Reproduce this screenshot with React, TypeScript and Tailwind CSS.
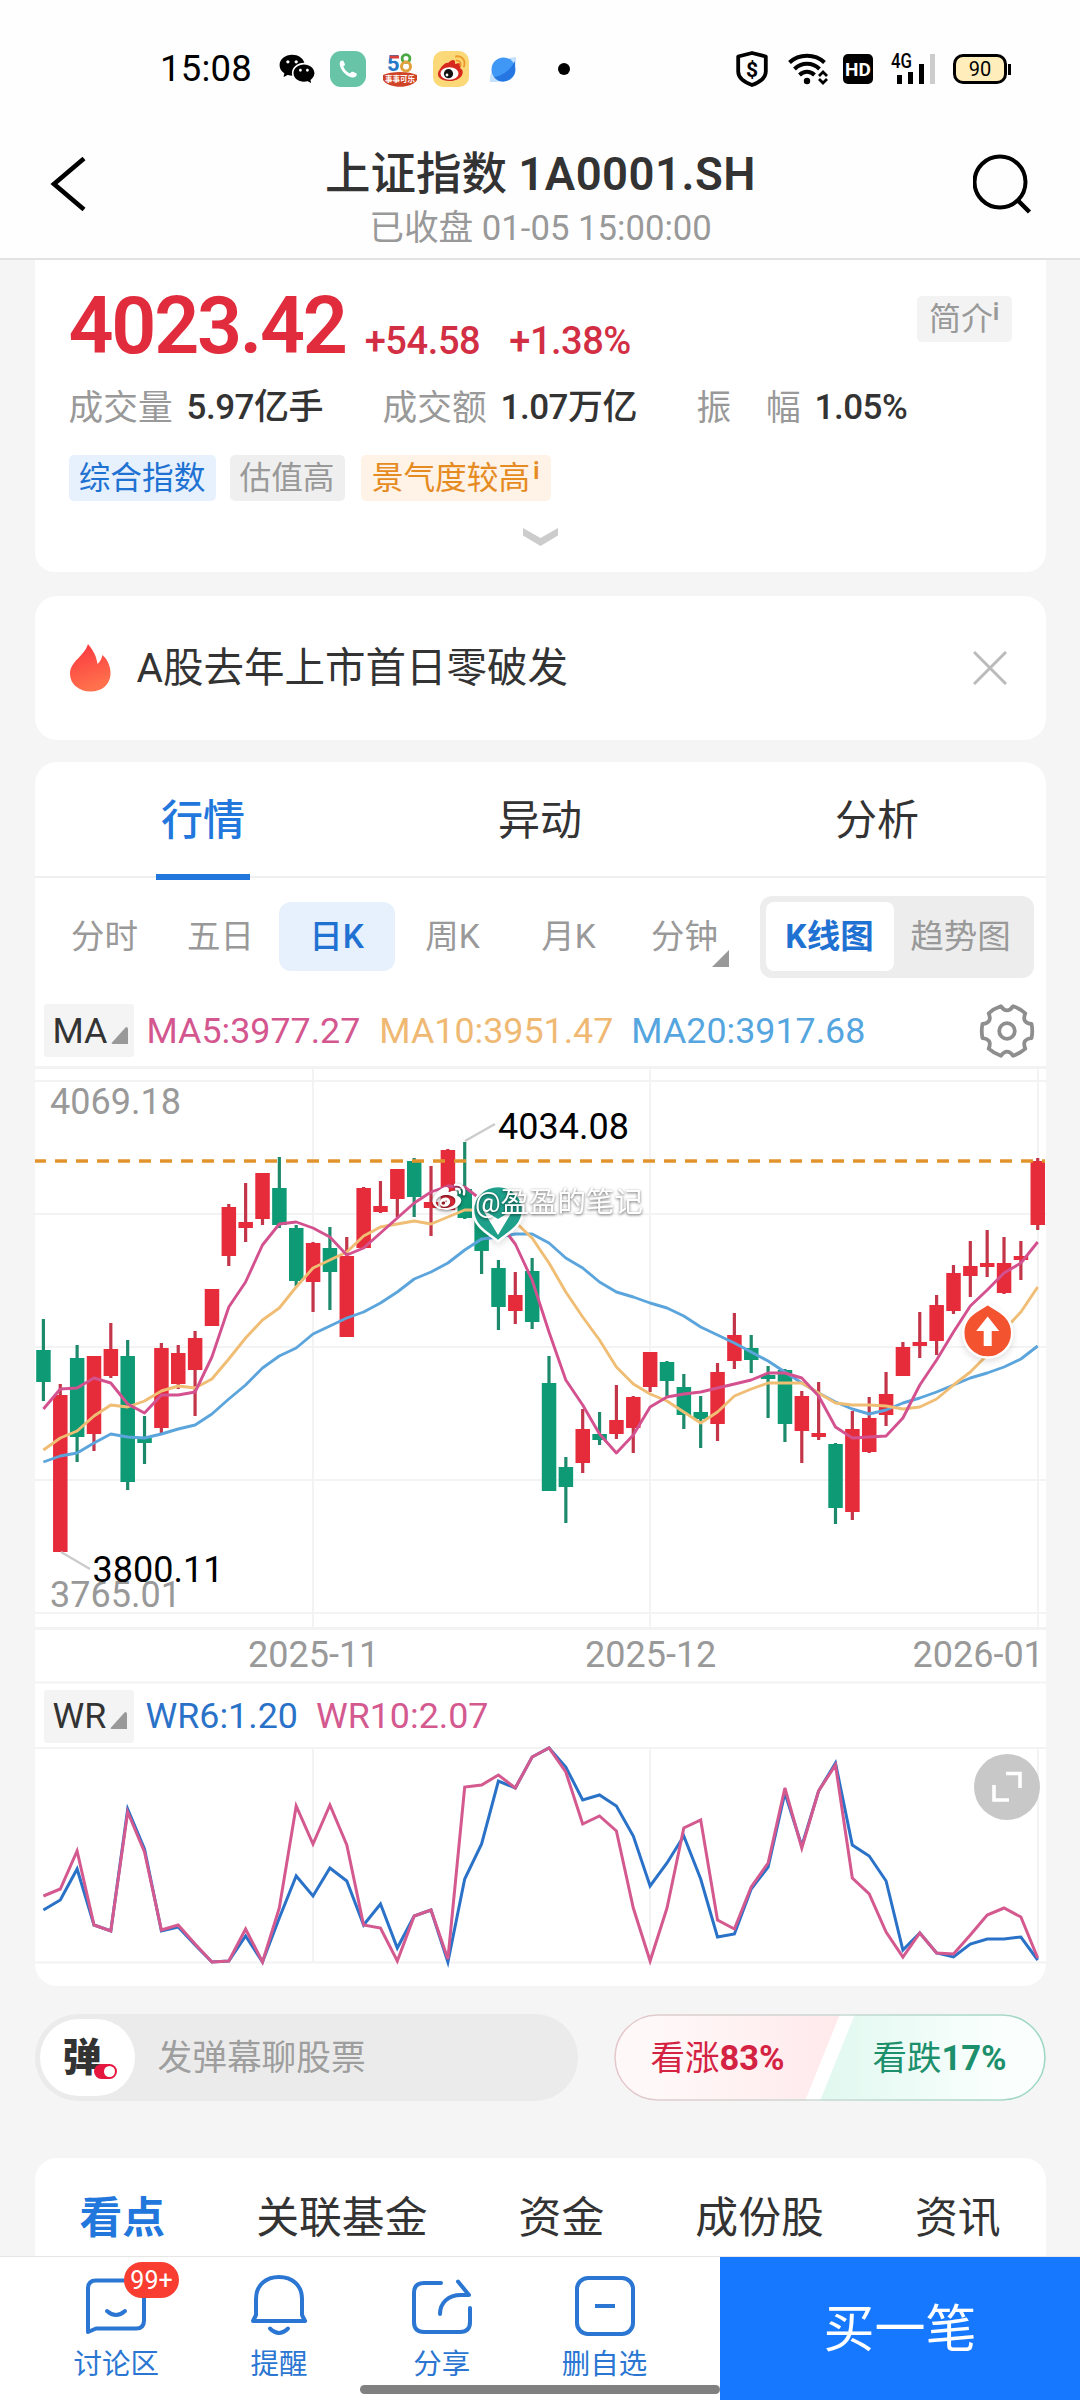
import React from "react";
import { RiWechatFill, RiWeiboFill } from "react-icons/ri";

type Candle = [up: 0 | 1, high: number, top: number, bottom: number, low: number];

const CANDLES: Candle[] = [
  [0, 1319, 1350, 1382, 1401], [1, 1384, 1395, 1552, 1552], [0, 1345, 1358, 1437, 1462], [1, 1356, 1356, 1434, 1451],
  [1, 1323, 1349, 1376, 1378], [0, 1340, 1356, 1482, 1490], [0, 1416, 1438, 1443, 1464], [1, 1343, 1348, 1428, 1433],
  [1, 1345, 1353, 1384, 1389], [1, 1331, 1338, 1370, 1416], [1, 1289, 1289, 1326, 1326], [1, 1204, 1207, 1256, 1266],
  [1, 1183, 1222, 1228, 1242], [1, 1173, 1173, 1219, 1225], [0, 1157, 1188, 1225, 1228], [0, 1225, 1228, 1281, 1286],
  [1, 1242, 1243, 1282, 1312], [0, 1227, 1248, 1272, 1310], [1, 1237, 1256, 1337, 1337], [1, 1187, 1188, 1248, 1249],
  [1, 1181, 1206, 1212, 1213], [1, 1169, 1169, 1199, 1217], [0, 1158, 1161, 1197, 1217], [1, 1166, 1202, 1208, 1236],
  [1, 1149, 1150, 1210, 1210], [0, 1142, 1189, 1218, 1219], [0, 1215, 1218, 1251, 1274], [0, 1260, 1268, 1307, 1330],
  [1, 1272, 1295, 1311, 1324], [0, 1258, 1271, 1322, 1329], [0, 1356, 1383, 1491, 1491], [0, 1457, 1467, 1487, 1523],
  [1, 1409, 1429, 1463, 1473], [0, 1412, 1434, 1440, 1445], [1, 1385, 1420, 1434, 1439], [1, 1396, 1397, 1428, 1453],
  [1, 1352, 1352, 1387, 1392], [0, 1361, 1362, 1381, 1398], [0, 1374, 1387, 1415, 1429], [0, 1396, 1412, 1419, 1448],
  [1, 1363, 1372, 1424, 1441], [1, 1313, 1335, 1361, 1369], [0, 1335, 1348, 1360, 1373], [0, 1366, 1375, 1379, 1418],
  [0, 1369, 1370, 1424, 1442], [1, 1391, 1396, 1431, 1463], [1, 1382, 1433, 1437, 1440], [0, 1443, 1444, 1508, 1524],
  [1, 1411, 1429, 1512, 1520], [1, 1397, 1418, 1452, 1453], [1, 1372, 1394, 1415, 1426], [1, 1342, 1347, 1376, 1376],
  [1, 1312, 1342, 1346, 1358], [1, 1295, 1305, 1341, 1355], [1, 1265, 1273, 1311, 1314], [1, 1241, 1266, 1276, 1297],
  [1, 1230, 1263, 1267, 1277], [1, 1237, 1263, 1293, 1294], [1, 1241, 1256, 1260, 1280], [1, 1158, 1161, 1225, 1230],
];

const MA5 = [1409, 1389, 1388, 1378, 1383, 1404, 1413, 1395, 1395, 1392, 1357, 1307, 1282, 1245, 1224, 1222, 1228, 1237, 1255, 1248, 1233, 1218, 1203, 1192, 1186, 1187, 1200, 1222, 1244, 1280, 1332, 1380, 1405, 1434, 1453, 1435, 1407, 1397, 1394, 1392, 1388, 1384, 1380, 1373, 1373, 1378, 1396, 1427, 1438, 1437, 1436, 1418, 1385, 1360, 1332, 1306, 1290, 1273, 1263, 1242];
const MA10 = [1450, 1438, 1431, 1416, 1405, 1407, 1401, 1391, 1386, 1388, 1379, 1359, 1338, 1320, 1308, 1287, 1268, 1260, 1252, 1236, 1227, 1224, 1221, 1224, 1217, 1210, 1210, 1214, 1222, 1238, 1263, 1292, 1317, 1340, 1367, 1384, 1394, 1401, 1412, 1423, 1412, 1396, 1389, 1383, 1383, 1383, 1393, 1403, 1405, 1405, 1406, 1409, 1407, 1399, 1385, 1372, 1355, 1330, 1312, 1287];
const MA20 = [1462, 1456, 1453, 1443, 1434, 1437, 1438, 1434, 1429, 1425, 1414, 1399, 1385, 1368, 1356, 1348, 1334, 1326, 1318, 1312, 1303, 1292, 1279, 1272, 1263, 1250, 1239, 1237, 1234, 1234, 1243, 1258, 1268, 1282, 1292, 1297, 1303, 1308, 1316, 1327, 1335, 1343, 1352, 1361, 1372, 1383, 1393, 1402, 1409, 1414, 1410, 1403, 1398, 1392, 1385, 1378, 1373, 1367, 1359, 1346];
const WR6 = [1910, 1900, 1869, 1925, 1931, 1809, 1849, 1931, 1927, 1945, 1962, 1961, 1936, 1962, 1918, 1876, 1896, 1868, 1881, 1925, 1904, 1948, 1916, 1910, 1962, 1879, 1844, 1781, 1788, 1757, 1748, 1767, 1800, 1795, 1806, 1836, 1886, 1863, 1836, 1879, 1937, 1934, 1889, 1867, 1793, 1846, 1791, 1763, 1845, 1856, 1881, 1950, 1933, 1953, 1957, 1944, 1939, 1939, 1937, 1960];
const WR10 = [1896, 1889, 1851, 1925, 1931, 1812, 1852, 1930, 1925, 1944, 1962, 1961, 1929, 1962, 1908, 1806, 1844, 1805, 1845, 1925, 1928, 1961, 1916, 1910, 1959, 1787, 1785, 1775, 1788, 1757, 1748, 1772, 1824, 1816, 1831, 1908, 1961, 1908, 1828, 1820, 1920, 1929, 1887, 1863, 1788, 1848, 1791, 1765, 1878, 1894, 1932, 1957, 1933, 1953, 1954, 1935, 1915, 1908, 1917, 1958];

const RED = "#e62b3b";
const GREEN = "#0f9a76";
const xAt = (i: number) => 43.4 + i * 16.853;
const line = (ys: number[]) => ys.map((y, i) => `${xAt(i).toFixed(1)},${y}`).join(" ");

function gearPath() {
  const p = (deg: number, r: number) => {
    const a = (deg * Math.PI) / 180;
    return `${(30 + r * Math.cos(a)).toFixed(2)} ${(30 + r * Math.sin(a)).toFixed(2)}`;
  };
  let d = `M${p(-16, 25.5)}`;
  for (let k = 0; k < 6; k++) {
    d += `Q${p(60 * k, 26)} ${p(60 * k + 16, 25.5)}Q${p(60 * k + 30, 16.5)} ${p(60 * k + 44, 25.5)}`;
  }
  return d + "Z";
}

function StatusBar() {
  return (
    <div className="flex h-[80px] shrink-0 items-center pl-[160px] pr-[69px] pt-[58px]">
      <span className="w-[91px] text-[36.500px] leading-[38px] tracking-[0.2px] text-black">15:08</span>
      <RiWechatFill className="ml-[27px] size-[38px] text-black" />
      <svg className="ml-[14px] size-[36px]" viewBox="0 0 36 36">
        <rect width="36" height="36" rx="11" fill="#67c4a7" />
        <path d="M12 9.500c-2 .6-2.600 2-2.200 4.200C10.800 19.500 16 25 21.800 26.400c2.600.5 4.200-.2 4.900-2.300.3-1-.1-1.600-.9-2l-3-1.300c-.7-.3-1.300-.1-1.800.5l-1 1.200c-3.300-1.500-5.300-3.800-6.700-7l1.200-1.100c.5-.5.6-1 .3-1.700l-1.200-2.500c-.3-.6-.8-.9-1.600-.7Z" fill="#fff" />
      </svg>
      <svg className="ml-[16px] size-[36px] overflow-visible" viewBox="0 0 36 36">
        <text x="5" y="20" fontSize="22" fontWeight="700" fill="#2779c8">5</text>
        <path d="M8 4.500h9v3h-9z" fill="#d9413c" />
        <circle cx="24" cy="7.500" r="3.900" fill="none" stroke="#4aa741" strokeWidth="2.800" />
        <circle cx="24" cy="15.500" r="4.500" fill="none" stroke="#e0a03c" strokeWidth="3" />
        <path d="M1 24c8-4 26-4 34 0v5c-5 9-29 9-34 0Z" fill="#cf4326" />
        <text x="3" y="31" fontSize="7.500" fontWeight="700" fill="#fff">事事可乐</text>
      </svg>
      <svg className="ml-[15px] size-[36px]" viewBox="0 0 36 36">
        <rect width="36" height="36" rx="10" fill="#fbd978" />
        <path d="M15 12c4-4 8-4 7 1 5-2 8 0 5 4 6 3 2 13-10 13C6 30 2 24 7 18c2-3 6-7 8-6Z" fill="#d7281f" />
        <ellipse cx="16.500" cy="22.500" rx="9" ry="6.200" fill="#fff" />
        <circle cx="15.500" cy="22.700" r="4.600" fill="#111" />
        <circle cx="14" cy="24" r="1.400" fill="#fff" />
        <path d="M23 5.500c6-1 10 4 8 10M23.500 9.500c3 0 5 2 4 5" fill="none" stroke="#ee9b2e" strokeWidth="2" strokeLinecap="round" />
      </svg>
      <svg className="ml-[16px] size-[36px]" viewBox="0 0 36 36">
        <path d="M5 31C4 24 8 8 31 6c0 8-1 14-5 19C20 31 12 31 5 31Z" fill="#c4e0fd" />
        <circle cx="18.500" cy="18.500" r="12" fill="#3f97f6" />
        <path d="M9 26C18 25 26 18 30 10v10c-1 9-14 15-21 6Z" fill="#2576e0" />
      </svg>
      <span className="ml-[37px] size-[12px] rounded-full bg-black" />
      <svg className="ml-auto h-[36px] w-[32px] overflow-visible" viewBox="0 0 32 36">
        <path d="M16 2 29.800 5.500v15c0 6-5.500 10.500-13.800 13.500C7.700 31 2.200 26.500 2.200 20.500v-15Z" fill="none" stroke="#000" strokeWidth="3.800" strokeLinejoin="round" />
        <text x="16" y="25.500" fontSize="21" fontWeight="700" textAnchor="middle" fill="#000">$</text>
      </svg>
      <svg className="ml-[20px] h-[32px] w-[42px]" viewBox="0 0 42 32">
        <g fill="none" stroke="#000" strokeWidth="4">
          <path d="M1.500 9.500C11 .5 27 .5 36.500 9.500" />
          <path d="M6.500 16C13.500 9 24.500 9 31.500 16" />
          <path d="M11.500 22c4.500-4.300 10.500-4.300 15 0" />
          <path d="m31 23 4-4 4 4M31 26l4 4 4-4" strokeWidth="2.800" />
        </g>
        <circle cx="19" cy="28" r="3.200" />
      </svg>
      <span className="ml-[13px] flex h-[30px] w-[30px] items-center justify-center rounded-[5px] bg-black text-[19px] font-bold leading-none text-white">HD</span>
      <svg className="ml-[18px] h-[32px] w-[46px] overflow-visible" viewBox="0 0 46 32">
        <text x="0" y="15" fontSize="20" fontWeight="500" textLength="21" lengthAdjust="spacingAndGlyphs" fill="#000">4G</text>
        <path d="M8.500 22v9M19.500 19v12M30.500 11v20" stroke="#000" strokeWidth="5" />
        <path d="M41.500 1v30" stroke="#ccc" strokeWidth="5" />
      </svg>
      <span className="ml-[16px] flex h-[30px] w-[54px] items-center justify-center rounded-[10px] border-[3px] border-black bg-[#ffeebb] text-[20px] leading-none text-black">90</span>
      <span className="ml-px h-[11px] w-[3px] bg-black" />
    </div>
  );
}

function TitleBar() {
  return (
    <header className="flex h-[180px] shrink-0 justify-between border-b-2 border-[#e2e2e2] pl-[50px] pr-[47px]">
      <svg className="mt-[77px] h-[54px] w-[36px]" viewBox="0 0 36 54">
        <path d="M34 1.500 4 27l30 25.500" fill="none" stroke="#000" strokeWidth="4.600" />
      </svg>
      <div className="flex flex-col items-center pl-[22px]">
        <h1 className="mt-[64px] whitespace-pre text-[45.500px] font-medium leading-[62px] text-[#333]">上证指数 <b className="font-semibold tracking-[0.500px]">1A0001.SH</b></h1>
        <p className="text-[34.700px] leading-[44px] text-[#999]">已收盘 01-05 15:00:00</p>
      </div>
      <svg className="mt-[74px] size-[60px]" viewBox="0 0 60 60">
        <circle cx="27" cy="28" r="25.500" fill="none" stroke="#000" strokeWidth="4" />
        <path d="m45 46.500 11.500 11.500" stroke="#000" strokeWidth="4.500" />
      </svg>
    </header>
  );
}

function Stat({ label, value, className }: { label: string; value: string; className: string }) {
  return (
    <div className={`flex whitespace-pre ${className}`}>
      <span className="text-[34.700px] text-[#999]">{label}</span>
      <span className="ml-[14px] text-[35px] font-medium tracking-[-0.500px] text-[#333]">{value}</span>
    </div>
  );
}

function QuoteCard() {
  return (
    <section className="h-[312px] shrink-0 rounded-b-[20px] bg-white px-[34px]">
      <div className="flex h-[112px] items-end">
        <span className="text-[79px] font-semibold leading-[92px] tracking-[-2.300px] text-[#e02c3c]">4023.42</span>
        <span className="ml-[19px] text-[38px] font-medium leading-[61px] tracking-[-0.400px] text-[#d22f45]">+54.58</span>
        <span className="ml-[29px] text-[38px] font-medium leading-[61px] tracking-[-0.500px] text-[#d22f45]">+1.38%</span>
        <span className="mb-[30px] ml-auto flex h-[46px] w-[95px] justify-center rounded-[5px] bg-[#f3f3f3] text-[32px] leading-[46px] text-[#999]">
          简介<sup className="top-0 text-[23px] font-bold leading-[34px]">i</sup>
        </span>
      </div>
      <div className="mt-[12px] flex h-[48px] items-center leading-[48px]">
        <Stat label="成交量" value="5.97亿手" className="w-[314px]" />
        <Stat label="成交额" value="1.07万亿" className="w-[314px]" />
        <Stat label="振　幅" value="1.05%" className="" />
      </div>
      <div className="mt-[23px] flex h-[46px] text-[31.700px] leading-[47px]">
        <span className="w-[147px] rounded-[5px] bg-[#e7f1fd] text-center text-[#1f72d2]">综合指数</span>
        <span className="ml-[14px] w-[115px] rounded-[5px] bg-[#efefef] text-center text-[#999]">估值高</span>
        <span className="ml-[16px] flex w-[190px] justify-center rounded-[5px] bg-[#fff2e6] text-[#e58b22]">景气度较高<sup className="top-0 ml-[3px] text-[23px] font-bold leading-[34px]">i</sup></span>
      </div>
      <svg className="mx-auto mt-[27px] h-[18px] w-[35px]" viewBox="0 0 35 18">
        <path d="M0 0 17.500 10 35 0V7.500L17.500 18 0 7.500Z" fill="#ccc" />
      </svg>
    </section>
  );
}

function NewsCard() {
  return (
    <section className="mt-[24px] flex h-[144px] shrink-0 items-center rounded-[22px] bg-white px-[35px]">
      <svg className="h-[48px] w-[41px]" viewBox="0 0 41 48">
        <defs>
          <linearGradient id="flame" x1="0" y1="0" x2="0.300" y2="1">
            <stop offset="0" stopColor="#fb3340" />
            <stop offset="1" stopColor="#ff714c" />
          </linearGradient>
        </defs>
        <path d="M18 0c4 5 8 10 9.500 20 2.500-2 4-5 5-9C38 16 41 23 40.500 31 39.500 41 32 47.500 20.500 47.500S0 40 0 30C0 17 14 13 18 0Z" fill="url(#flame)" />
      </svg>
      <span className="ml-[26px] text-[40.500px] leading-[58px] text-[#333]">A股去年上市首日零破发</span>
      <svg className="ml-auto mr-[4px] size-[34px]" viewBox="0 0 34 34">
        <path d="m1 1 32 32M33 1 1 33" stroke="#bbb" strokeWidth="3" />
      </svg>
    </section>
  );
}

function MarketTabs() {
  return (
    <>
      <div className="grid h-[116px] grid-cols-3 border-b-2 border-[#efefef] text-center text-[42px] leading-[118px] text-[#333]">
        <div className="relative font-medium text-[#2277dc]">
          行情
          <span className="absolute bottom-0 left-1/2 h-[6px] w-[94px] -translate-x-1/2 bg-[#2277dc]" />
        </div>
        <div>异动</div>
        <div>分析</div>
      </div>
      <div className="flex h-[115px] items-center pl-[12px] pr-[12px] pt-[2px] text-[33.500px] text-[#999]">
        <div className="grid w-[696px] grid-cols-6 text-center leading-[70px]">
          <span>分时</span>
          <span>五日</span>
          <span className="h-[69px] rounded-[12px] bg-[#e7f1fd] font-medium text-[#1f72d2]">日K</span>
          <span>周K</span>
          <span>月K</span>
          <span className="relative">
            分钟
            <svg className="absolute bottom-[5px] right-[14px] size-[17px]" viewBox="0 0 17 17"><path d="M17 0v17H0Z" fill="#999" /></svg>
          </span>
        </div>
        <div className="ml-auto flex h-[82px] w-[274px] items-center rounded-[12px] bg-[#ededed] px-[6px] text-center leading-[70px]">
          <span className="h-[69px] w-[128px] rounded-[8px] bg-white font-bold text-[#1f72d2]">K线图</span>
          <span className="flex-1">趋势图</span>
        </div>
      </div>
    </>
  );
}

function IndicatorButton({ name }: { name: string }) {
  return (
    <span className="flex h-[53px] w-[90px] items-center rounded-[3px] bg-[#f4f4f4] pl-[9px] text-[#333]">
      {name}
      <svg className="ml-[4px] mt-[9px] size-[17px]" viewBox="0 0 17 17"><path d="M15 0q2 0 2 2v15H1.500q-1.500 0-.5-1.500Z" fill="#999" /></svg>
    </span>
  );
}

function CandleChart() {
  return (
    <svg className="block h-[618px] w-[1011px] shrink-0" viewBox="35 1066 1011 618" fontSize="36">
      <g stroke="#f3f3f3" strokeWidth="2">
        <path d="M35 1067.500h1011M35 1628.500h1011" strokeWidth="3" />
        <path d="M35 1081h1011M35 1214h1011M35 1347h1011M35 1480h1011M35 1613h1011M35 1682.500h1011M313 1067v562M650 1067v562M1038 1067v562" />
      </g>
      <text x="50" y="1114" fill="#999">4069.18</text>
      <text x="50" y="1607" fill="#999">3765.01</text>
      {CANDLES.map(([up, high, top, bottom, low], i) => (
        <g key={i} fill={up ? RED : GREEN}>
          <rect x={xAt(i) - 1.6} y={high} width="3.200" height={low - high} fill={up ? "#c33549" : "#1d8a6c"} />
          <rect x={xAt(i) - 7.2} y={top} width="14.500" height={Math.max(bottom - top, 4)} />
        </g>
      ))}
      <path d="M34 1161h1011" stroke="#e2942c" strokeWidth="3.600" strokeDasharray="12 9" />
      <g fill="none" strokeWidth="2.900" strokeLinejoin="round">
        <polyline points={line(MA20)} stroke="#5ba5dc" />
        <polyline points={line(MA10)} stroke="#f0bd74" />
        <polyline points={line(MA5)} stroke="#d4518f" />
      </g>
      <path d="m465 1141 30-17M61 1552l29 17" stroke="#ccc" strokeWidth="2.500" />
      <text x="498" y="1139" fill="#000">4034.08</text>
      <text x="92.500" y="1582" fill="#000">3800.11</text>
      <g fill="#999">
        <text x="248" y="1667">2025-11</text>
        <text x="585" y="1667">2025-12</text>
        <text x="912.500" y="1667">2026-01</text>
      </g>
      <g className="drop-shadow-md">
        <path d="M498 1241.500c-5-6-25-13-25-31.500a25 24 0 0 1 50 0c0 18.500-20 25.500-25 31.500Z" fill="#1fa08b" stroke="#fff" strokeWidth="2.500" />
        <path d="m483 1210 15 9 15-9-15 25Z" fill="#fff" />
      </g>
      <g className="drop-shadow-md">
        <path d="M987.700 1303.500c6 6 24.500 10 24.500 29.500a24.500 24.500 0 0 1-49 0c0-19.500 18.500-23.500 24.500-29.500Z" fill="#f4532f" stroke="#fff" strokeWidth="2.500" />
        <path d="m987.700 1316.500 11.500 14.500h-7.500v15h-8v-15h-7.500Z" fill="#fff" />
      </g>
      <g className="drop-shadow-[0_1px_1.500px_rgba(0,0,0,0.600)]" fill="#fff">
        <RiWeiboFill x="431" y="1179" width="41" height="41" color="#fff" fill="#fff" />
        <text x="475" y="1212" fontSize="28.500">@盈盈的笔记</text>
      </g>
    </svg>
  );
}

function WrChart() {
  return (
    <div className="relative h-[240px]">
      <svg className="block h-[240px] w-[1011px]" viewBox="35 1746 1011 240">
        <path d="M35 1748h1011M35 1962.500h1011M313 1748v214M650 1748v214M1038 1748v214" stroke="#f3f3f3" strokeWidth="2" />
        <g fill="none" strokeWidth="3">
          <polyline points={line(WR6)} stroke="#2a72c8" />
          <polyline points={line(WR10)} stroke="#d3598f" />
        </g>
      </svg>
      <span className="absolute right-[6px] top-[8px] flex size-[66px] items-center justify-center rounded-full bg-[#c8c8c8]">
        <svg className="size-[32px]" viewBox="0 0 32 32"><path d="M15 2.500h14V17M3 14v15h15" fill="none" stroke="#fff" strokeWidth="3.600" /></svg>
      </span>
    </div>
  );
}

function MarketCard() {
  return (
    <section className="mt-[22px] flex h-[1224px] shrink-0 flex-col overflow-hidden rounded-[22px] bg-white">
      <MarketTabs />
      <div className="flex h-[73px] shrink-0 items-center pl-[9px] pr-[12px] pt-[2px] text-[35.800px] leading-[52px]">
        <IndicatorButton name="MA" />
        <span className="ml-[13px] text-[#d4568f]">MA5:3977.27</span>
        <span className="ml-[19px] text-[#efb973]">MA10:3951.47</span>
        <span className="ml-[18px] text-[#55a5df]">MA20:3917.68</span>
        <svg className="ml-auto mr-[-3px] size-[60px]" viewBox="0 0 60 60" fill="none" stroke="#8e8e8e" strokeWidth="3.800">
          <path d={gearPath()} strokeLinejoin="round" />
          <circle cx="30" cy="30" r="7.800" />
        </svg>
      </div>
      <CandleChart />
      <div className="flex h-[62px] shrink-0 items-center pl-[9px] pt-[2px] text-[35.800px] leading-[50px]">
        <IndicatorButton name="WR" />
        <span className="ml-[12px] text-[#2a72c8]">WR6:1.20</span>
        <span className="ml-[18px] text-[#d3598f]">WR10:2.07</span>
      </div>
      <WrChart />
    </section>
  );
}

function DanmuRow() {
  return (
    <div className="mt-[28px] flex h-[87px] shrink-0 justify-between">
      <div className="flex w-[543px] items-center rounded-full bg-[#ebebeb] pl-[5px]">
        <span className="relative flex h-[77px] w-[95px] items-center rounded-full bg-white pl-[23px] pt-[2px] text-[39px] font-black leading-none text-[#333]">
          弹
          <span className="absolute left-[54px] top-[45px] flex h-[15px] w-[23px] items-center justify-end rounded-full bg-[#e5173f] pr-[2px]">
            <span className="size-[11px] rounded-full bg-white" />
          </span>
        </span>
        <span className="ml-[23px] pt-px text-[34.700px] leading-[50px] text-[#9e9e9e]">发弹幕聊股票</span>
      </div>
      <div className="relative flex w-[432px] items-center rounded-full pt-px text-[34.500px] leading-[50px]">
        <svg className="absolute inset-0 h-[87px] w-[432px]" viewBox="0 0 432 87">
          <defs>
            <linearGradient id="rise"><stop offset="0.200" stopColor="#fff8f8" /><stop offset="1" stopColor="#ffe9eb" /></linearGradient>
            <linearGradient id="fall"><stop offset="0" stopColor="#e0f8ef" /><stop offset="0.800" stopColor="#fafffd" /></linearGradient>
            <linearGradient id="rim"><stop offset="0" stopColor="#e3c8cc" /><stop offset="0.500" stopColor="#c9d9d3" /><stop offset="1" stopColor="#9ed6c3" /></linearGradient>
            <clipPath id="pill"><rect width="432" height="87" rx="43.500" /></clipPath>
          </defs>
          <g clipPath="url(#pill)">
            <rect width="432" height="87" fill="#fff" />
            <path d="M0 0h226l-35 87H0Z" fill="url(#rise)" />
            <path d="M241 0h191v87H206Z" fill="url(#fall)" />
          </g>
          <rect x="1" y="1" width="430" height="85" rx="42.500" fill="none" stroke="url(#rim)" strokeWidth="1.600" />
        </svg>
        <span className="relative ml-[37px] w-[222px] text-[#d42243]">看涨<b>83%</b></span>
        <span className="relative text-[#1c8f6c]">看跌<b>17%</b></span>
      </div>
    </div>
  );
}

function ContentTabs() {
  return (
    <section className="mt-[57px] flex h-[98px] shrink-0 justify-between rounded-t-[22px] bg-white pl-[45px] pr-[45px] text-[42.800px] leading-[120px] text-[#333]">
      <span className="font-bold text-[#2277dc]">看点</span>
      <span>关联基金</span>
      <span>资金</span>
      <span>成份股</span>
      <span>资讯</span>
    </section>
  );
}

function NavItem({ label, children }: { label: string; children: React.ReactNode }) {
  return (
    <div className="relative flex flex-1 flex-col items-center">
      <svg className="mt-[16px] h-[66px] w-[66px]" viewBox="0 0 66 66" fill="none" stroke="#2a76d2" strokeWidth="4" strokeLinecap="round" strokeLinejoin="round">
        {children}
      </svg>
      <span className="mt-[5px] text-[28.500px] leading-[42px] text-[#2a76d2]">{label}</span>
    </div>
  );
}

function BottomBar() {
  return (
    <footer className="relative flex h-[144px] w-[1080px] shrink-0 border-t border-[#e6e6e6] bg-white">
      <div className="flex w-[720px] pl-[35px] pr-[34px]">
        <div className="relative flex flex-1">
          <NavItem label="讨论区">
            <path d="M5 59V15.500Q5 7.500 13 7.500h40q8 0 8 8v32q0 8-8 8H13Z" />
            <path d="M24 38q9 8 18 0" />
          </NavItem>
          <span className="absolute left-[89px] top-[5px] flex h-[36px] w-[55px] items-center justify-center rounded-full bg-[#f93e31] text-[25px] leading-none text-white">99+</span>
        </div>
        <NavItem label="提醒">
          <path d="M10 42V26C10 12 20 4 33 4s23 8 23 22v16l3 6H7Z" />
          <path d="M24 55.500q9 9 18 0" />
        </NavItem>
        <NavItem label="分享">
          <path d="M32 10H15Q5 10 5 20v29q0 10 10 10h36q10 0 10-10V35" />
          <path d="M49 8.500 60 22H52C39 22 31 30 31 41" />
        </NavItem>
        <NavItem label="删自选">
          <rect x="5" y="5" width="56" height="56" rx="11" />
          <path d="M23 33h20" strokeLinecap="butt" />
        </NavItem>
      </div>
      <button className="w-[360px] bg-[#1677ff] pt-[2px] text-[51px] leading-[142px] text-white">买一笔</button>
      <span className="absolute bottom-[6px] left-1/2 h-[9px] w-[360px] -translate-x-1/2 rounded-full bg-[#808080]" />
    </footer>
  );
}

export default function App() {
  return (
    <div className="flex h-[2400px] w-[1080px] flex-col overflow-hidden bg-[#f5f5f5] font-['Roboto','Noto_Sans_CJK_SC',sans-serif]">
      <div className="flex h-[260px] shrink-0 flex-col bg-[#fefefe]">
        <StatusBar />
        <TitleBar />
      </div>
      <main className="flex h-[1996px] shrink-0 flex-col px-[34.500px]">
        <QuoteCard />
        <NewsCard />
        <MarketCard />
        <DanmuRow />
        <ContentTabs />
      </main>
      <BottomBar />
    </div>
  );
}
